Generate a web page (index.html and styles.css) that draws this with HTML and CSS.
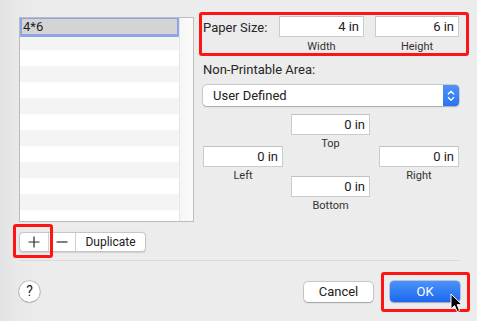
FILE: index.html
```html
<!DOCTYPE html>
<html>
<head>
<meta charset="utf-8">
<link rel="stylesheet" href="styles.css">
</head>
<body>
<div class="dialog">
  <div class="main">
    <div class="left">
      <div class="list">
        <div class="rows">
          <div class="row sel">4*6</div>
        </div>
        <div class="scroll"></div>
      </div>
      <div class="seg">
        <div class="seg-btn plus"><svg width="12" height="12" viewBox="0 0 12 12"><path d="M6 0.5V11.5M0.5 6H11.5" stroke="#2a2a2a" stroke-width="1.2" fill="none"/></svg></div>
        <div class="seg-btn minus"><svg width="12" height="12" viewBox="0 0 12 12"><path d="M0.5 6H11.5" stroke="#2a2a2a" stroke-width="1.2" fill="none"/></svg></div>
        <div class="seg-btn dup">Duplicate</div>
      </div>
    </div>
    <div class="panel">
      <div class="paper">
        <span class="lbl">Paper Size:</span>
        <div class="fg w85"><div class="field">4 in</div><div class="cap">Width</div></div>
        <div class="fg w84 gap11"><div class="field">6 in</div><div class="cap">Height</div></div>
      </div>
      <div class="np">Non-Printable Area:</div>
      <div class="popup">
        <span class="popup-text">User Defined</span>
        <span class="stepper"><svg width="16" height="21" viewBox="0 0 16 21"><path d="M5.3 9L8 6.3L10.7 9M5.3 12.5L8 15.2L10.7 12.5" stroke="#fff" stroke-width="1.3" fill="none" stroke-linecap="round" stroke-linejoin="round"/></svg></span>
      </div>
      <div class="margins">
        <div class="col side">
          <div class="fg"><div class="field">0 in</div><div class="cap">Left</div></div>
        </div>
        <div class="col center">
          <div class="fg"><div class="field">0 in</div><div class="cap">Top</div></div>
          <div class="fg bottom"><div class="field">0 in</div><div class="cap">Bottom</div></div>
        </div>
        <div class="col side">
          <div class="fg"><div class="field">0 in</div><div class="cap">Right</div></div>
        </div>
      </div>
    </div>
  </div>
  <div class="sep"></div>
  <div class="footer">
    <div class="help">?</div>
    <div class="btn cancel">Cancel</div>
    <div class="btn ok">OK</div>
  </div>
  <div class="mark mark-paper"></div>
  <div class="mark mark-plus"></div>
  <div class="mark mark-ok"></div>
  <svg class="cursor" width="13" height="20" viewBox="0 0 13 20"><path d="M1 1L1 16L4.6 12.6L7.1 18.6L9.6 17.6L7.1 11.7L12 11.7Z" fill="#000" stroke="#fff" stroke-width="1" stroke-linejoin="round"/></svg>
</div>
</body>
</html>
```

FILE: styles.css
```css
* { box-sizing: border-box; }
html, body { margin: 0; padding: 0; }
body {
  width: 477px;
  height: 321px;
  overflow: hidden;
  background: #ececec;
  font-family: Roboto, "Liberation Sans", Arial, sans-serif;
  color: #262626;
  font-size: 13px;
}
.dialog {
  position: relative;
  width: 477px;
  height: 321px;
  padding: 16px 0 0 19px;
  background: linear-gradient(to right, #e3e3e3 0, #e9e9e9 18px, #ececec 40px);
}
.main { display: flex; gap: 9px; }
.left { display: flex; flex-direction: column; }
.list {
  margin-top: 1px;
  width: 175px;
  height: 205px;
  border: 1px solid #bcbcbc;
  background: #fff;
  display: flex;
}
.rows {
  flex: 1;
  background: repeating-linear-gradient(to bottom, #fff 0, #fff 16px, #f4f4f4 16px, #f4f4f4 32px);
}
.row { height: 16px; }
.row.sel {
  height: 19px;
  background: #d4d4d4;
  border-top: 1px solid #8ea4e8;
  border-left: 2px solid #8ea4e8;
  border-right: 2px solid #8ea4e8;
  border-bottom: 3px solid #8ea4e8;
  padding-left: 1px;
  font-size: 13px;
  line-height: 15px;
  color: #222;
}
.scroll {
  width: 14px;
  border-left: 1px solid #e6e6e6;
  background: linear-gradient(to right, #f6f6f6, #fbfbfb);
}
.seg {
  margin-top: 10px;
  width: 127px;
  height: 20px;
  display: flex;
  background: #fff;
  border: 1px solid #c6c6c6;
  border-radius: 4px;
  box-shadow: 0 0.5px 1px rgba(0,0,0,0.12);
}
.seg-btn {
  display: flex;
  align-items: center;
  justify-content: center;
  height: 100%;
}
.plus { width: 29px; border-right: 1px solid #d2d2d2; }
.minus { width: 27px; border-right: 1px solid #d2d2d2; }
.dup { flex: 1; font-size: 12px; color: #222; }

.panel { width: 256px; display: flex; flex-direction: column; }
.paper { display: flex; align-items: flex-start; }
.lbl { width: 76px; line-height: 21px; padding-top: 1px; }
.fg { display: flex; flex-direction: column; width: 80px; }
.fg.w85 { width: 85px; }
.fg.w84 { width: 84px; }
.gap11 { margin-left: 11px; }
.field {
  height: 21px;
  background: #fff;
  border: 1px solid #cbcbcb;
  border-top-color: #c2c2c2;
  text-align: right;
  padding-right: 4px;
  line-height: 19px;
  font-size: 13px;
  color: #222;
}
.cap {
  margin-top: 3px;
  text-align: center;
  font-size: 11px;
  line-height: 13px;
  color: #333;
}
.np { margin-top: 9px; line-height: 16px; }
.popup {
  margin-top: 7px;
  height: 21px;
  display: flex;
  align-items: center;
  background: #fff;
  border-radius: 4px;
  box-shadow: 0 0 0 0.5px rgba(0,0,0,0.22), 0 0.5px 1.5px rgba(0,0,0,0.2);
  overflow: hidden;
}
.popup-text { flex: 1; padding-left: 10px; color: #222; }
.stepper {
  width: 16px;
  height: 21px;
  background: linear-gradient(to bottom, #4d93f8, #2a73f1);
  display: flex;
}
.margins { margin-top: 8px; display: flex; gap: 8px; }
.col { display: flex; flex-direction: column; width: 80px; }
.col.center { width: 79px; margin-right: 1px; }
.col.side { padding-top: 32px; }
.col .fg { width: 100%; }
.cap { margin-top: 2px; }
.paper .cap { margin-top: 3px; }
.fg.bottom { margin-top: 26px; }

.sep {
  margin-top: 8px;
  width: 440px;
  height: 1px;
  background: #dadada;
}
.footer {
  margin-top: 20px;
  width: 441px;
  display: flex;
  align-items: center;
}
.help {
  width: 21px;
  height: 21px;
  border-radius: 50%;
  background: #fff;
  box-shadow: 0 0 0 0.5px rgba(0,0,0,0.25), 0 0.5px 1.5px rgba(0,0,0,0.25);
  text-align: center;
  line-height: 21px;
  font-size: 14px;
  color: #222;
}
.btn {
  height: 20px;
  border-radius: 4px;
  text-align: center;
  line-height: 20px;
  font-size: 13px;
}
.cancel {
  margin-left: auto;
  width: 69px;
  background: #fff;
  color: #222;
  box-shadow: 0 0 0 0.5px rgba(0,0,0,0.25), 0 0.5px 1.5px rgba(0,0,0,0.22);
}
.ok {
  margin-left: 17px;
  width: 70px;
  height: 21px;
  line-height: 21px;
  color: #fff;
  background: linear-gradient(to bottom, #4b93fa, #1c68ee);
  box-shadow: 0 0 0 0.5px rgba(0,40,160,0.35), 0 0.5px 1.5px rgba(0,0,0,0.2);
}
.mark {
  position: absolute;
  border: 3px solid #ff1414;
  border-radius: 3px;
}
.mark-paper { left: 199px; top: 12px; width: 270px; height: 44px; }
.mark-plus { left: 13px; top: 224px; width: 40px; height: 34px; }
.mark-ok { left: 381px; top: 272px; width: 89px; height: 40px; }
.cursor { position: absolute; left: 450px; top: 293px; }
```
